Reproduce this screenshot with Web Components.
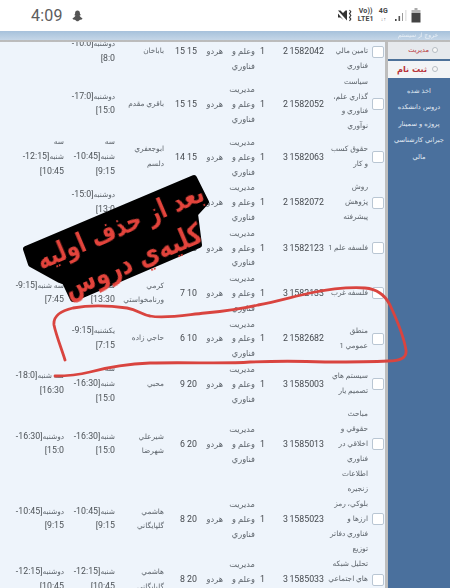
<!DOCTYPE html>
<html lang="fa"><head><meta charset="utf-8"><title>ثبت نام</title>
<style>
html,body{margin:0;padding:0;background:#fff}
body{width:450px;height:588px;overflow:hidden;position:relative;font-family:Roboto,"DejaVu Sans",sans-serif}
app-shell{height:557px}
</style></head><body>
<status-bar></status-bar>
<app-shell>
  <course-table>
    <course-row><span slot="name">&nbsp;<br>تامين مالي<br>فناوري</span><span slot="code">1582042</span><span slot="unit">2</span><span slot="cap">15</span><span slot="count">15</span><span slot="teacher">باباخان</span><time-slot slot="t1" day="دوشنبه" from="10:0" to="8:0"></time-slot></course-row>
    <course-row><span slot="name">سياست<br>گذاري علم،<br>فناوري و<br>نوآوري</span><span slot="code">1582052</span><span slot="unit">2</span><span slot="cap">15</span><span slot="count">15</span><span slot="teacher">باقري مقدم</span><time-slot slot="t1" day="دوشنبه" from="17:0" to="15:0"></time-slot></course-row>
    <course-row><span slot="name">حقوق كسب<br>و كار</span><span slot="code">1582063</span><span slot="unit">3</span><span slot="cap">15</span><span slot="count">14</span><span slot="teacher">ابوجعفري<br>دلسم</span><time-slot slot="t1" pre="سه" day="شنبه" from="10:45" to="9:15"></time-slot><time-slot slot="t2" pre="سه" day="شنبه" from="12:15" to="10:45"></time-slot></course-row>
    <course-row><span slot="name">روش<br>پژوهش<br>پيشرفته</span><span slot="code">1582072</span><span slot="unit">2</span><span slot="cap">15</span><span slot="count">12</span><span slot="teacher">كرمي</span><time-slot slot="t1" day="دوشنبه" from="15:0" to="13:0"></time-slot></course-row>
    <course-row><span slot="name">فلسفه علم 1</span><span slot="code">1582123</span><span slot="unit">3</span><span slot="cap">15</span><span slot="count">10</span><span slot="teacher">كرمي</span><time-slot slot="t1" day="شنبه" from="15:0" to="13:30"></time-slot></course-row>
    <course-row><span slot="name">فلسفه غرب</span><span slot="code">1582133</span><span slot="unit">3</span><span slot="cap">10</span><span slot="count">7</span><span slot="teacher">كرمي<br>ورنامخواستي</span><time-slot slot="t1" day="شنبه" from="15:0" to="13:30"></time-slot><time-slot slot="t2" day="سه شنبه" from="9:15" to="7:45"></time-slot></course-row>
    <course-row><span slot="name">منطق<br>عمومي 1</span><span slot="code">1582682</span><span slot="unit">2</span><span slot="cap">10</span><span slot="count">6</span><span slot="teacher">حاجي زاده</span><time-slot slot="t1" day="يكشنبه" from="9:15" to="7:15"></time-slot></course-row>
    <course-row><span slot="name">سيستم هاي<br>تصميم يار</span><span slot="code">1585003</span><span slot="unit">3</span><span slot="cap">20</span><span slot="count">9</span><span slot="teacher">محبي</span><time-slot slot="t1" pre="سه" day="شنبه" from="16:30" to="15:0"></time-slot><time-slot slot="t2" day="سه شنبه" from="18:0" to="16:30"></time-slot></course-row>
    <course-row><span slot="name">مباحث<br>حقوقي و<br>اخلاقي در<br>فناوري<br>اطلاعات</span><span slot="code">1585013</span><span slot="unit">3</span><span slot="cap">20</span><span slot="count">6</span><span slot="teacher">شيرعلي<br>شهرضا</span><time-slot slot="t1" day="شنبه" from="16:30" to="15:0"></time-slot><time-slot slot="t2" day="دوشنبه" from="16:30" to="15:0"></time-slot></course-row>
    <course-row><span slot="name">زنجيره<br>بلوكي، رمز<br>ارزها و<br>فناوري دفاتر<br>توزيع</span><span slot="code">1585023</span><span slot="unit">3</span><span slot="cap">20</span><span slot="count">8</span><span slot="teacher">هاشمي<br>گلپايگاني</span><time-slot slot="t1" day="شنبه" from="10:45" to="9:15"></time-slot><time-slot slot="t2" day="دوشنبه" from="10:45" to="9:15"></time-slot></course-row>
    <course-row><span slot="name">تحليل شبكه<br>هاي اجتماعي<br>&nbsp;</span><span slot="code">1585033</span><span slot="unit">3</span><span slot="cap">20</span><span slot="count">8</span><span slot="teacher">هاشمي<br>گلپايگاني</span><time-slot slot="t1" day="شنبه" from="12:15" to="10:45"></time-slot><time-slot slot="t2" day="دوشنبه" from="12:15" to="10:45"></time-slot></course-row>
  </course-table>
  <side-nav slot="side"></side-nav>
</app-shell>
<hand-loop></hand-loop>
<note-sticker></note-sticker>
<script>
function def(name,html){customElements.define(name,class extends HTMLElement{constructor(){super();this.attachShadow({mode:"open"}).innerHTML=html}})}

customElements.define("time-slot",class extends HTMLElement{
  connectedCallback(){
    if(this.shadowRoot)return;
    const a=k=>this.getAttribute(k)||"";
    this.attachShadow({mode:"open"}).innerHTML=`<style>:host{display:inline}b{font-weight:400;font-size:8.8px;line-height:0;font-family:Roboto,sans-serif;color:#4d5257}</style>${a("pre")?a("pre")+"<br>":""}${a("day")}<b>[${a("from")}-</b><br><b>${a("to")}]</b>`;
  }
});

def("status-bar",`<style>
:host{display:flex;align-items:center;height:31px;padding:0 29px 0 31px;background:#fff;color:#5c5c5c;box-sizing:border-box}
.t{font:400 16px/1 Roboto,sans-serif;letter-spacing:.2px}
.g{margin-left:9px;display:flex}
.r{margin-left:auto;display:flex;align-items:center}
.s{font:700 7px/7.600px Roboto,sans-serif;color:#444;text-align:center;letter-spacing:.2px}
</style>
<span class="t">4:09</span>
<span class="g"><svg width="11" height="12" viewBox="0 0 11 12"><path d="M5.5 0.5c1.600 0 2.400 1.100 2.400 2.600 0 1 .5 1.500 1 1.900-.5.4-1 .5-1.400.4.2.9 1.800 2.300 3 3 0 1-1.500 1.200-2.400 1.400-1 .9-1.600 1.500-2.600 1.500s-1.700-.6-2.600-1.500C2 9.700.5 9.500.5 8.500c1.200-.7 2.800-2.100 3-3-.4.1-.9 0-1.400-.4.5-.4 1-.9 1-1.900C3.100 1.600 3.900.5 5.500.5z" fill="#555"/></svg></span>
<span class="r">
<svg width="14" height="13" viewBox="0 0 14 13"><path d="M0 1.500L9 11.500V1.500H7.500L5 4 2.500 1.500zM0 4.500v4h2.500l3 2.500L0 4.500z" fill="#333"/><path d="M11.500 1l1.300 1.800-1.300 1.800 1.300 1.900-1.300 1.800 1.300 1.800-1.300 1.800" fill="none" stroke="#333" stroke-width="1.100"/></svg>
<span class="s" style="margin-left:6px">Vo))<br>LTE1</span>
<span class="s" style="margin-left:5px">4G<br><span style="font-size:5px;color:#777">↓↑</span></span>
<svg style="margin-left:6px" width="13" height="13" viewBox="0 0 13 13"><path d="M1 10h1.600v2H1z" fill="#444"/><path d="M4.500 7h1.600v5H4.500z" fill="#555"/><path d="M8 4h1v8H8z" fill="#999"/><path d="M11.500 1h.8v11h-.8z" fill="#ccc"/></svg>
<svg style="margin-left:4px" width="10" height="15" viewBox="0 0 10 15"><path d="M3.500 0h3v2h-3z" fill="#aaa"/><path d="M.5 2h9v3h-9z" fill="#b5b5b5"/><path d="M.5 5h9v9.500h-9z" fill="#444"/></svg>
</span>`);

def("app-shell",`<style>
:host{display:flex;flex-direction:column;background:#eef4fb}
.hd{height:11px;flex:none;background:linear-gradient(#a6c1db,#c6d7e8 85%,#bbb 85%,#bdbdbd);color:#fff;font:6px/7px "DejaVu Sans",sans-serif;padding-left:398px;overflow:hidden;direction:rtl;text-align:left;box-sizing:border-box;padding-right:3px}
.hd span{opacity:.7}
.b{flex:1;display:flex;min-height:0}
.m{width:385px;flex:none;overflow:hidden;filter:blur(.3px)}
.bar{width:3px;flex:none;background:#bdbdbd}
.s{flex:1;display:flex;min-width:0}
</style>
<div class="hd"><span>خروج از سيستم</span></div>
<div class="b"><div class="m"><slot></slot></div><div class="bar"></div><div class="s"><slot name="side"></slot></div></div>`);

def("course-table",`<style>:host{display:block;margin-top:-13px}</style><slot></slot>`);

def("course-row",`<style>
:host{display:grid;direction:rtl;grid-template-columns:17px 44px 36px 23px 10px 32px 26px 12px 21px 49px 51px 64px;align-items:center;font:8.2px/14.8px Roboto,"DejaVu Sans",sans-serif;color:#5e656c;padding:.5px 0;white-space:nowrap}
.c{overflow:visible;min-width:0}
.ck{width:10px;height:10px;margin-right:1.500px;background:#fff;border:1px solid #b9c6d3;border-radius:2px}
.n{font-size:8.800px;color:#45494e}
.a{font-size:7.400px}
</style>
<div class="ck"></div>
<div class="c a"><slot name="name"></slot></div>
<div class="c n"><slot name="code"></slot></div>
<div class="c n"><slot name="unit"></slot></div>
<div class="c n">1</div>
<div class="c">مديريت<br>وعلم و<br>فناوري</div>
<div class="c">هردو</div>
<div class="c n"><slot name="cap"></slot></div>
<div class="c n"><slot name="count"></slot></div>
<div class="c a"><slot name="teacher"></slot></div>
<div class="c a"><slot name="t1"></slot></div>
<div class="c a"><slot name="t2"></slot></div>`);

def("side-nav",`<style>
:host{display:flex;flex-direction:column;flex:1;min-width:0;direction:rtl;font-family:"DejaVu Sans",sans-serif}
.tab{height:16.500px;display:flex;align-items:center;gap:3px;background:#e6e9ed;color:#b8343a;font-size:6.600px;flex:none;padding-right:12px}
.tab i{width:6px;height:6px;border:1px solid #b5bcc3;border-radius:50%;box-sizing:border-box;background:#f7f7f7;flex:none}
.sep{height:2px;background:#4d7199;flex:none}
.cur{background:#f2f4f6;font-weight:700;font-size:8.200px;height:17px;gap:5px}
.list{flex:1;background:#4a709d;color:#e4ecf4;font-size:6.600px;line-height:16.600px;text-align:center;padding-top:5px;white-space:nowrap}
</style>
<div class="tab"><i></i><span>مديريت</span></div><div class="sep"></div>
<div class="tab cur"><i></i><span>ثبت نام</span></div>
<div class="list">اخذ شده<br>دروس دانشكده<br>پروژه و سمينار<br>جبراني كارشناسي<br>مالي</div>`);

def("hand-loop",`<style>:host{position:absolute;left:0;top:0;width:450px;height:588px;pointer-events:none}</style>
<svg width="450" height="588" viewBox="0 0 450 588"><path d="M65 360C62 350 56 335 54 325C53 316 60 311 73 308C90 305 112 306 127 308C138 310 142 315 150 316C165 319 185 315 205 313C225 311 245 308 258 305C275 302 292 297 310 293C330 289 350 287 365 288C378 289 385 295 390 305C397 320 404 338 406 350C407 358 400 361 388 361C370 362 345 362 325 362C300 361 275 361 250 362C225 364 190 362 150 363C125 364 105 368 90 372C78 375 65 376 55 376" fill="none" stroke="#d9443f" stroke-width="2.800" stroke-linecap="round" stroke-linejoin="round"/></svg>`);

def("note-sticker",`<style>
:host{position:absolute;left:0;top:0;width:450px;height:588px;pointer-events:none;direction:rtl}
svg{position:absolute;left:0;top:0}
div{position:absolute;white-space:nowrap;color:#e3443c;font:700 27px/1 "DejaVu Sans",sans-serif;transform:translate(-50%,-50%) rotate(-23deg) scaleX(.8);filter:blur(.3px)}
</style>
<svg width="450" height="588" viewBox="0 0 450 588"><path d="M26 249L194 178L206 202L195 214L199 245L73 299L65 282L60 280L31 264Z" fill="#000" stroke="#000" stroke-width="6" stroke-linejoin="round"/></svg>
<div style="left:120px;top:226px">بعد از حذف اوليه</div>
<div style="left:133px;top:261px;font-size:29px">كليه‌ي دروس</div>`);
</script>
</body></html>
